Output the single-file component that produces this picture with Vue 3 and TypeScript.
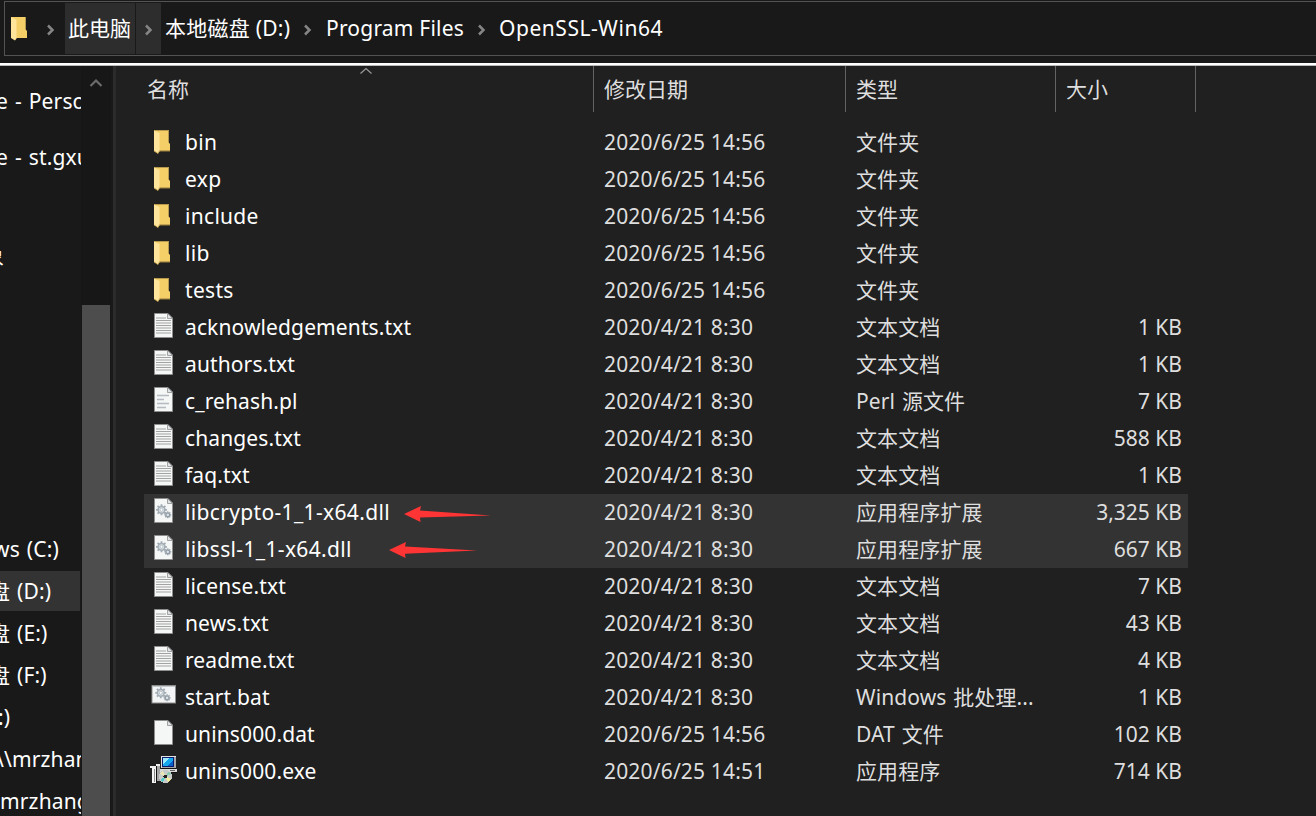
<script setup lang="ts">
interface Entry {
  name: string
  date: string
  type: string
  size: string
  icon: 'folder' | 'txt' | 'pl' | 'dll' | 'bat' | 'blank' | 'setup'
  marked?: boolean
}

const late = '2020/6/25 14:56'
const base = '2020/4/21 8:30'

const entries: Entry[] = [
  { name: 'bin', date: late, type: '文件夹', size: '', icon: 'folder' },
  { name: 'exp', date: late, type: '文件夹', size: '', icon: 'folder' },
  { name: 'include', date: late, type: '文件夹', size: '', icon: 'folder' },
  { name: 'lib', date: late, type: '文件夹', size: '', icon: 'folder' },
  { name: 'tests', date: late, type: '文件夹', size: '', icon: 'folder' },
  { name: 'acknowledgements.txt', date: base, type: '文本文档', size: '1 KB', icon: 'txt' },
  { name: 'authors.txt', date: base, type: '文本文档', size: '1 KB', icon: 'txt' },
  { name: 'c_rehash.pl', date: base, type: 'Perl 源文件', size: '7 KB', icon: 'pl' },
  { name: 'changes.txt', date: base, type: '文本文档', size: '588 KB', icon: 'txt' },
  { name: 'faq.txt', date: base, type: '文本文档', size: '1 KB', icon: 'txt' },
  { name: 'libcrypto-1_1-x64.dll', date: base, type: '应用程序扩展', size: '3,325 KB', icon: 'dll', marked: true },
  { name: 'libssl-1_1-x64.dll', date: base, type: '应用程序扩展', size: '667 KB', icon: 'dll', marked: true },
  { name: 'license.txt', date: base, type: '文本文档', size: '7 KB', icon: 'txt' },
  { name: 'news.txt', date: base, type: '文本文档', size: '43 KB', icon: 'txt' },
  { name: 'readme.txt', date: base, type: '文本文档', size: '4 KB', icon: 'txt' },
  { name: 'start.bat', date: base, type: 'Windows 批处理...', size: '1 KB', icon: 'bat' },
  { name: 'unins000.dat', date: late, type: 'DAT 文件', size: '102 KB', icon: 'blank' },
  { name: 'unins000.exe', date: '2020/6/25 14:51', type: '应用程序', size: '714 KB', icon: 'setup' },
]

/* gap: space above the row; shift: how far the label is scrolled to the left */
const tree = [
  { label: 'e - Personal', gap: 14, shift: -4 },
  { label: 'e - st.gxu.edu', gap: 14, shift: -4 },
  { label: '象', gap: 57, shift: -17 },
  { label: 'ws (C:)', gap: 251, shift: -7 },
  { label: '盘 (D:)', gap: 0, shift: -11, active: true },
  { label: '盘 (E:)', gap: 0, shift: -11 },
  { label: '盘 (F:)', gap: 0, shift: -11 },
  { label: ':)', gap: 0, shift: -2 },
  { label: '\\\\mrzhang', gap: 0, shift: -4 },
  { label: 'mrzhang', gap: 0, shift: 0 },
]
const lines = [9, 11.5, 14, 16.5, 19, 21.5, 24]
const teeth = [0, 45, 90, 135]
</script>

<template>
  <div class="window">
    <header class="top">
      <nav class="address">
        <svg class="root" width="18" height="26" viewBox="3 5 18 26">
          <path d="M4 6H18.7V18.5L20 20V27H9Z" fill="#f4cf68" />
          <path d="M4 6L9.5 9V27.5L8 29.5L4 27Z" fill="#ffe49b" />
        </svg>
        <svg class="chev c1" width="10" height="14" viewBox="0 0 10 14"><path d="M2 2.5L6.5 7L2 11.5" /></svg>
        <span class="crumb hot">此电脑</span>
        <span class="hot arrow"><svg class="chev" width="10" height="14" viewBox="0 0 10 14"><path d="M2 2.5L6.5 7L2 11.5" /></svg></span>
        <span class="crumb disk">本地磁盘 (D:)</span>
        <svg class="chev c2" width="10" height="14" viewBox="0 0 10 14"><path d="M2 2.5L6.5 7L2 11.5" /></svg>
        <span class="crumb prog">Program Files</span>
        <svg class="chev c3" width="10" height="14" viewBox="0 0 10 14"><path d="M2 2.5L6.5 7L2 11.5" /></svg>
        <span class="crumb last">OpenSSL-Win64</span>
      </nav>
    </header>

    <div class="body">
      <aside class="tree">
        <div
          v-for="(t, i) in tree"
          :key="i"
          class="node"
          :class="{ active: t.active }"
          :style="{ marginTop: t.gap + 'px', textIndent: t.shift + 'px' }"
        >{{ t.label }}</div>
      </aside>
      <div class="scroll">
        <svg class="up" width="14" height="12" viewBox="0 0 14 12"><path d="M1.5 9L7 3.5L12.5 9" /></svg>
        <div class="thumb"></div>
      </div>
      <div class="split"></div>

      <main class="list">
        <div class="head">
          <div class="h name-h">名称
            <svg class="sort" width="14" height="8" viewBox="0 0 14 8"><path d="M1.5 6.5L7 1.5L12.5 6.5" /></svg>
          </div>
          <div class="h">修改日期</div>
          <div class="h">类型</div>
          <div class="h">大小</div>
        </div>

        <div v-for="e in entries" :key="e.name" class="row" :class="{ marked: e.marked }">
          <svg class="icon" width="30" height="37" viewBox="0 0 30 37">
            <g v-if="e.icon === 'folder'">
              <path d="M4 6H18.7V18.5L20 20V26.7H9Z" fill="#f4cf68" />
              <path d="M4 6.5H18.7" stroke="#b79a4b" />
              <path d="M4 6.5L9.5 9V27.5L8 29.5L4 27Z" fill="#ffe49b" />
              <path d="M4 27L8 29.5L9.3 27H20" fill="none" stroke="#c29f48" stroke-width=".8" />
            </g>
            <g v-else-if="e.icon === 'bat'">
              <rect x="2" y="6.5" width="23.5" height="17.5" fill="#f3f4f5" stroke="#8c8c8c" />
              <path d="M2.5 7.5H25" stroke="#c4c9cc" />
            </g>
            <g v-else-if="e.icon === 'setup'" shape-rendering="crispEdges">
              <rect x="11" y="3" width="15" height="12" fill="#e4e4e4" />
              <rect x="12" y="4" width="14" height="11" fill="#a8a8a8" />
              <rect x="12" y="4" width="12" height="10" fill="#0b1c6c" />
              <rect x="13" y="5" width="10" height="8" fill="#16a8ee" />
              <path d="M13 5H19L13 11Z" fill="#9ceaff" />
              <path d="M23 8V13H17Z" fill="#0860c8" />
              <rect x="11" y="15" width="15" height="1" fill="#111" />
              <rect x="9" y="16" width="18" height="3" fill="#dcdcdc" />
              <rect x="20" y="17" width="5" height="1" fill="#666" />
              <rect x="10" y="19" width="17" height="1" fill="#111" />
              <path d="M0 13H6V15H0Z M6 11H10V13H6Z" fill="#eee" />
              <rect x="2" y="15" width="4" height="15" fill="#f4f4f4" />
              <rect x="4" y="16" width="1" height="13" fill="#888" />
              <rect x="7" y="13" width="3" height="15" fill="#a5a5a5" />
              <rect x="6" y="13" width="1" height="17" fill="#111" />
              <circle cx="15.5" cy="23.5" r="6.5" fill="#c7cccb" />
              <path d="M15.5 23.5L9.5 21L13 18Z" fill="#e9e8b4" />
              <path d="M15.5 23.5L10 27L13 29Z" fill="#59ccc8" />
              <path d="M15.5 23.5L21 21L19 18Z" fill="#8bc9ac" />
              <path d="M15.5 23.5L21 26L18 29Z" fill="#f0ee9c" />
              <circle cx="15.5" cy="23.5" r="2" fill="#222" />
            </g>
            <g v-else>
              <path d="M4.5 4.5H18L22.5 9V28.5H4.5Z" fill="#f5f6f6" stroke="#8e8e8e" />
              <path d="M17.5 4.5V9.5H22.5Z" fill="#dfe3e5" stroke="#8e8e8e" stroke-width=".8" />
              <template v-if="e.icon === 'txt'">
                <path v-for="y in lines" :key="y" :d="`M6 ${y}H${y < 11 ? 16 : 21}`" stroke="#a2a2a2" />
              </template>
              <path v-if="e.icon === 'pl'" d="M7 12.5H19M7 16.5H14M7 20.5H19M7 24.5H16" stroke="#b4bac0" stroke-width="1.4" />
            </g>
            <g
              v-if="e.icon === 'dll' || e.icon === 'bat'"
              fill="none"
              stroke="#a3adb5"
              :transform="e.icon === 'bat' ? 'translate(-.7 -2)' : ''"
            >
              <g transform="translate(11.5 15.8)">
                <path v-for="a in teeth" :key="a" d="M0 -5.5V-3M0 3V5.5" stroke-width="1.8" :transform="`rotate(${a})`" />
                <circle r="3.4" fill="#dce3e7" stroke-width="1.5" />
                <circle r="1.5" fill="#fff" stroke-width=".7" />
              </g>
              <g transform="translate(17.8 20.8)" stroke="#929da6">
                <path v-for="a in teeth" :key="a" d="M0 -3.5V-2M0 2V3.5" stroke-width="1.2" :transform="`rotate(${a})`" />
                <circle r="1.9" fill="#dce3e7" stroke-width="1.3" />
              </g>
            </g>
          </svg>
          <span class="name" :class="e.icon">{{ e.name }}</span>
          <span class="date">{{ e.date }}</span>
          <span class="type">{{ e.type }}</span>
          <span class="size">{{ e.size }}</span>
        </div>

        <svg class="marks" width="104" height="56" viewBox="388 504 104 56">
          <path d="M404 514L421 506L420 510.5L491 515.6L420 517.5L420.5 522Z" />
          <path d="M389 550L406 542L405 546.5L477 550.6L405 553.8L405.5 558Z" />
        </svg>
      </main>
    </div>
  </div>
</template>

<style>
html,
body {
  margin: 0;
  background: #202020;
  overflow: hidden;
}
</style>

<style scoped>
.window {
  width: 1316px;
  height: 816px;
  display: flex;
  flex-direction: column;
  overflow: hidden;
  background: #202020;
  color: #fff;
  font-family: "Noto Sans", "Noto Sans CJK SC", sans-serif;
  font-size: 21px;
  white-space: nowrap;
}
.top {
  box-sizing: border-box;
  height: 66px;
  flex: none;
  padding: 1px 0 0 4px;
  background: #191919;
  border-bottom: 1px solid #b9bcb9;
  box-shadow: inset 0 -2px #fff;
}
.address {
  box-sizing: border-box;
  height: 55px;
  padding: 1px 0;
  display: flex;
  align-items: center;
  border: 1px solid #535353;
  border-right: 0;
  line-height: 50px;
}
.root {
  margin-left: 5px;
}
.crumb {
  height: 51px;
}
.chev {
  fill: none;
  stroke: #858585;
  stroke-width: 2.5;
  display: block;
}
.c1 {
  margin: 2px 1px 0 18px;
}
.hot {
  background: #2d2d2d;
  height: 51px;
}
.crumb.hot {
  box-sizing: border-box;
  width: 70px;
  margin-left: 8px;
  padding-left: 3px;
}
.arrow {
  width: 25px;
  margin-left: 1px;
  display: flex;
  align-items: center;
}
.arrow .chev {
  margin: 2px 0 0 8px;
}
.disk {
  width: 125px;
  margin-left: 4px;
  letter-spacing: 0.25px;
}
.c2 {
  margin: 2px 0 0 13px;
}
.prog {
  width: 138px;
  margin-left: 13px;
  letter-spacing: 0.2px;
}
.c3 {
  margin: 2px 0 0 13px;
}
.last {
  margin-left: 12px;
  letter-spacing: 0.55px;
}
.body {
  flex: 1;
  min-height: 0;
  display: flex;
}
.tree {
  width: 81px;
  overflow: hidden;
  background: #191919;
  letter-spacing: 0.15px;
  word-spacing: 1.3px;
}
.node {
  height: 42px;
  line-height: 42px;
}
.active {
  width: 80px;
  background: linear-gradient(#333, #333) 0 1px / 80px 40px no-repeat;
}
.scroll {
  width: 30px;
  display: flex;
  flex-direction: column;
  align-items: center;
  background: #171717;
}
.up {
  margin-top: 11px;
  fill: none;
  stroke: #6b6b6b;
  stroke-width: 2.2;
}
.thumb {
  width: 28px;
  margin-top: 216px;
  flex: 1;
  background: #4d4d4d;
}
.split {
  width: 3px;
  border-left: 2px solid #191919;
  background: #2b2b2b;
}
.list {
  position: relative;
  flex: 1;
  padding-left: 28px;
}
.head {
  display: grid;
  grid-template-columns: 450px 252px 210px 140px;
  height: 46px;
  margin-bottom: 12px;
  color: #dedede;
}
.h {
  position: relative;
  border-right: 1px solid #636363;
  padding-left: 10px;
  line-height: 46px;
}
.name-h {
  padding-left: 3px;
}
.sort {
  position: absolute;
  left: 214.5px;
  top: 0.5px;
  fill: none;
  stroke: #9a9a9a;
  stroke-width: 1.2;
}
.row {
  display: grid;
  grid-template-columns: 35px 419px 252px 210px 122px;
  width: 1044px;
  height: 37px;
  line-height: 37px;
  color: #dedede;
}
.marked {
  background: #333;
}
.icon {
  margin-left: 6px;
}
.name {
  padding-left: 6px;
  color: #fff;
  letter-spacing: 0.12px;
}
.name.folder {
  letter-spacing: 0.3px;
}
.name.dll {
  letter-spacing: 0.34px;
}
.date {
  padding-left: 6px;
  letter-spacing: 0.17px;
}
.type {
  padding-left: 6px;
  line-height: 36px;
  letter-spacing: 0.1px;
  word-spacing: 1.3px;
}
.size {
  text-align: right;
}
.marks {
  position: absolute;
  left: 272px;
  top: 438px;
  fill: #ff3434;
}
</style>
